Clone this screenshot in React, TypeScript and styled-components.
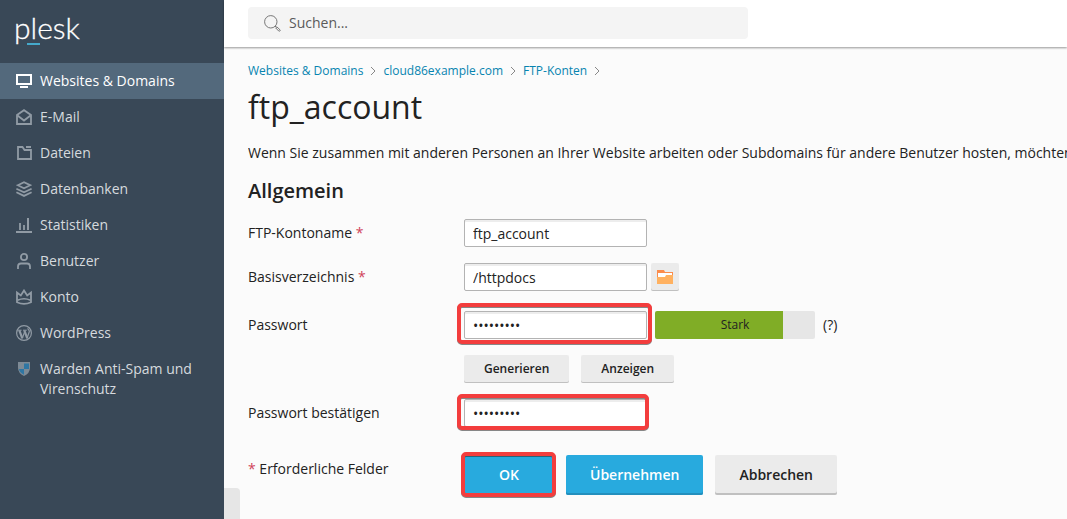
import React, { useState } from 'react';
import styled, { createGlobalStyle, css } from 'styled-components';

const GlobalStyle = createGlobalStyle`
  *, *::before, *::after { box-sizing: border-box; }
  body {
    margin: 0;
    background: #fbfbfb;
    color: #222;
    font: 14px/20px "Open Sans", "Noto Sans", sans-serif;
    overflow: hidden;
  }
  button, input { font: inherit; color: inherit; }
`;

const Page = styled.div`
  display: flex;
  min-height: 100vh;
`;

const Sidebar = styled.aside`
  flex: 0 0 224px;
  background: #394857;
`;

const Logo = styled.a`
  display: block;
  height: 63px;
  padding: 9px 14px 0;
  color: #fff;
  text-decoration: none;
  font: 300 30px/36px Lato, sans-serif;
  -webkit-text-stroke: 0.3px #fff;
`;

const LogoAccent = styled.span`
  position: relative;
  &::after {
    content: '';
    position: absolute;
    left: -4px;
    bottom: 0;
    width: 13px;
    height: 2px;
    background: #45a9cb;
  }
`;

const NavLink = styled.a<{ $active?: boolean }>`
  display: flex;
  gap: 8px;
  padding: 8px 16px;
  color: ${p => (p.$active ? '#fff' : '#d6dade')};
  background: ${p => (p.$active ? '#53697c' : 'transparent')};
  text-decoration: none;
  font-weight: 500;
  svg { color: ${p => (p.$active ? '#fff' : '#919ba5')}; }
`;

const Icon = styled.svg`
  flex: none;
  width: 16px;
  height: 16px;
  margin-top: 2px;
  fill: none;
  stroke: currentColor;
  stroke-width: 2;
`;

const Main = styled.div`
  flex: 1;
  min-width: 0;
`;

const TopBar = styled.header`
  height: 47px;
  padding: 7px 24px;
  background: #fff;
  box-shadow: 0 1px 2px rgba(0, 0, 0, 0.4);
`;

const SearchBox = styled.label`
  display: flex;
  align-items: center;
  gap: 8px;
  max-width: 500px;
  height: 32px;
  padding: 0 16px;
  border-radius: 4px;
  background: #f4f4f4;
  color: #777;
`;

const SearchInput = styled.input`
  flex: 1;
  min-width: 0;
  padding: 0;
  border: 0;
  outline: 0;
  background: transparent;
  &::placeholder { color: #5a5a5a; opacity: 1; }
`;

const Content = styled.main`
  padding: 14px 0 0 24px;
`;

const Breadcrumbs = styled.nav`
  display: flex;
  align-items: center;
  gap: 6px;
  font-size: 12px;
  a { color: #0784b0; text-decoration: none; }
`;

const Chevron = styled.svg`
  width: 8px;
  height: 10px;
  fill: none;
  stroke: #888;
`;

const Title = styled.h1`
  margin: 6px 0 16px;
  font-size: 32px;
  line-height: 40px;
  font-weight: 400;
`;

const Intro = styled.p`
  margin: 0;
  overflow: hidden;
  white-space: nowrap;
`;

const SectionTitle = styled.h2`
  margin: 14px 0;
  font-size: 20px;
  line-height: 28px;
  font-weight: 600;
`;

const Row = styled.div<{ $gap?: number; $top?: boolean }>`
  display: grid;
  grid-template-columns: 216px 1fr;
  align-items: ${p => (p.$top ? 'start' : 'center')};
  margin-bottom: ${p => p.$gap ?? 16}px;
`;

const Legend = styled.span`
  padding-top: 4px;
`;

const Required = styled.span`
  color: #d0435a;
`;

const Controls = styled.div<{ $gap?: number }>`
  display: flex;
  align-items: center;
  gap: ${p => p.$gap ?? 8}px;
`;

const frame = css`
  &::after {
    content: '';
    position: absolute;
    border: 4px solid #f33d3d;
    border-radius: 5px;
    filter: drop-shadow(0 1px 0 rgba(40, 40, 40, 0.55));
    pointer-events: none;
  }
`;

const FieldFrame = styled.div<{ $tight?: boolean }>`
  position: relative;
  display: flex;
  ${frame}
  &::after { inset: ${p => (p.$tight ? '-5px -2px -3px -7px' : '-8px -5px -5px -7px')}; }
`;

const ButtonFrame = styled.div`
  position: relative;
  display: flex;
  ${frame}
  &::after { inset: -3px -2px -2px -3px; }
`;

const TextInput = styled.input`
  width: 183px;
  height: 28px;
  padding: 0 8px;
  border: 1px solid #b3b3b3;
  border-radius: 2px;
  outline: 0;
  background: #fff;
  box-shadow: inset 0 2px 0 #ededed;
`;

const SmallButton = styled.button`
  height: 28px;
  padding: 0 20px;
  border: 0;
  border-radius: 2px;
  background: #ebebeb;
  box-shadow: inset 0 -1px 0 #c0c0c0;
  font-size: 12px;
  font-weight: 600;
`;

const FolderButton = styled(SmallButton)`
  display: grid;
  place-items: center;
  width: 28px;
  padding: 0;
`;

const LargeButton = styled.button<{ $primary?: boolean }>`
  height: 40px;
  padding: 0 24px;
  border: 0;
  border-radius: 2px;
  background: ${p => (p.$primary ? '#28aade' : '#ebebeb')};
  color: ${p => (p.$primary ? '#fff' : '#222')};
  box-shadow: inset 0 -2px 0 ${p => (p.$primary ? '#238fbd' : '#c0c0c0')};
  font-weight: 600;
`;

const OkButton = styled(LargeButton)`
  min-width: 90px;
`;

const Meter = styled.div`
  display: grid;
  width: 160px;
  height: 28px;
  border-radius: 2px;
  background: linear-gradient(to right, #80ad26 80%, #e6e6e6 80%);
  place-items: center;
  font-size: 12px;
`;

const Handle = styled.button`
  position: fixed;
  left: 224px;
  bottom: 0;
  width: 16px;
  height: 31px;
  padding: 0;
  border: 0;
  border-radius: 0 4px 0 0;
  background: #e6e6e6;
`;

const navItems = [
  {
    label: 'Websites & Domains',
    icon: <path d="M1 2h14v9H1zM4 14h8" />,
  },
  {
    label: 'E-Mail',
    icon: <><path d="M1 6 8 1.200 15 6v9H1z" strokeWidth="1.800" /><path d="m1.500 6.500 6.500 5 6.500-5" strokeWidth="1.800" /></>,
  },
  {
    label: 'Dateien',
    icon: <><path d="M2 2h4.500l2 3H15v9H2z" strokeWidth="1.800" /><path d="M10 2h5" /></>,
  },
  {
    label: 'Datenbanken',
    icon: <><path d="M1.800 4.200 8 1.200l6.200 3L8 7.200z" strokeWidth="1.800" /><path d="m.4 7.700 7.600 3.600 7.600-3.600M.4 11.300 8 14.900l7.600-3.600" strokeWidth="1.800" /></>,
  },
  {
    label: 'Statistiken',
    icon: <><path d="M0 15h16M12 13V1" /><path d="M4 13V6M8 13V8" strokeWidth="1.800" /></>,
  },
  {
    label: 'Benutzer',
    icon: <><circle cx="8" cy="4" r="3.100" strokeWidth="1.800" /><path d="M2 16v-2.500q0-3 3-3h6q3 0 3 3V16" strokeWidth="1.800" /></>,
  },
  {
    label: 'Konto',
    icon: <><path d="M1 3.500v9.700q7 3.400 14 0V3.500l-3.800 3L8 1.500l-3.200 5z" strokeWidth="1.800" /><path d="M1.500 11.200q6.500-3 13 0" strokeWidth="1.600" /></>,
  },
  {
    label: 'WordPress',
    icon: (
      <>
        <circle cx="8" cy="8" r="7.400" strokeWidth="1.200" />
        <path d="M2 5.200h3.600M7 5.200h3.800" strokeWidth="1" />
        <path d="m3.300 5.300 3 8M8.300 5.300l3 8" strokeWidth="2.200" />
        <path d="m6.300 13.300 2.200-6M11 13.300l2.300-6.500c.5-1.800-1.800-2-1.300-3.600" strokeWidth="1.200" />
      </>
    ),
  },
  {
    label: 'Warden Anti-Spam und Virenschutz',
    icon: (
      <g stroke="none">
        <path d="M2 1h12v6q0 5-6 8-6-3-6-8z" fill="#7d8a95" />
        <path d="M8 2.500h5V8H8z" fill="#2e76a3" />
        <path d="M3 8h5v5.800Q3.500 11.500 3 8z" fill="#2e76a3" />
      </g>
    ),
  },
];

const crumbs = ['Websites & Domains', 'cloud86example.com', 'FTP-Konten'];

export default function App() {
  const [name, setName] = useState('ftp_account');
  const [home, setHome] = useState('/httpdocs');
  const [password, setPassword] = useState('password1');
  const [confirm, setConfirm] = useState('password1');
  const [visible, setVisible] = useState(false);

  return (
    <>
      <GlobalStyle />
      <Page>
        <Sidebar>
          <Logo href="#">p<LogoAccent>l</LogoAccent>esk</Logo>
          <nav>
            {navItems.map((item, i) => (
              <NavLink key={item.label} href="#" $active={i === 0}>
                <Icon viewBox="0 0 16 16" aria-hidden="true">{item.icon}</Icon>
                <span>{item.label}</span>
              </NavLink>
            ))}
          </nav>
        </Sidebar>
        <Main>
          <TopBar>
            <SearchBox>
              <svg width="17" height="17" viewBox="0 0 17 17" fill="none" stroke="currentColor" aria-hidden="true">
                <circle cx="6.800" cy="6.800" r="6.200" />
                <path d="m11 11 1.500 1.500" />
                <path d="m12.800 11.800 3.200 3q.5.700-.1 1.200t-1.200 0l-3-3.100z" />
              </svg>
              <SearchInput type="search" placeholder="Suchen..." aria-label="Suchen" />
            </SearchBox>
          </TopBar>
          <Content>
            <Breadcrumbs>
              {crumbs.map(c => (
                <React.Fragment key={c}>
                  <a href="#">{c}</a>
                  <Chevron viewBox="0 0 8 10" aria-hidden="true"><path d="m2 1 4 4-4 4" /></Chevron>
                </React.Fragment>
              ))}
            </Breadcrumbs>
            <Title>ftp_account</Title>
            <Intro>
              Wenn Sie zusammen mit anderen Personen an Ihrer Website arbeiten oder Subdomains für andere Benutzer hosten, möchten
            </Intro>
            <SectionTitle>Allgemein</SectionTitle>
            <form onSubmit={e => e.preventDefault()}>
              <Row>
                <label htmlFor="name">FTP-Kontoname <Required>*</Required></label>
                <Controls>
                  <TextInput id="name" value={name} onChange={e => setName(e.target.value)} />
                </Controls>
              </Row>
              <Row $gap={20}>
                <label htmlFor="home">Basisverzeichnis <Required>*</Required></label>
                <Controls $gap={4}>
                  <TextInput id="home" value={home} onChange={e => setHome(e.target.value)} />
                  <FolderButton type="button" aria-label="Verzeichnis wählen">
                    <svg width="16" height="14" viewBox="0 0 16 14" aria-hidden="true">
                      <path d="M0 0h7l1 2h8v5H0z" fill="#fb8c4c" />
                      <path d="M1 3h14v4H1z" fill="#fff" />
                      <path d="M0 7h8l1-2h7v9H0z" fill="#ffb160" />
                    </svg>
                  </FolderButton>
                </Controls>
              </Row>
              <Row>
                <label htmlFor="password">Passwort</label>
                <Controls>
                  <FieldFrame>
                    <TextInput id="password" type={visible ? 'text' : 'password'} value={password} onChange={e => setPassword(e.target.value)} />
                  </FieldFrame>
                  <Meter>Stark</Meter>
                  <span>(?)</span>
                </Controls>
              </Row>
              <Row>
                <span />
                <Controls $gap={12}>
                  <SmallButton type="button">Generieren</SmallButton>
                  <SmallButton type="button" onClick={() => setVisible(!visible)}>Anzeigen</SmallButton>
                </Controls>
              </Row>
              <Row $gap={28}>
                <label htmlFor="confirm">Passwort bestätigen</label>
                <Controls>
                  <FieldFrame $tight>
                    <TextInput id="confirm" type="password" value={confirm} onChange={e => setConfirm(e.target.value)} />
                  </FieldFrame>
                </Controls>
              </Row>
              <Row $gap={24} $top>
                <Legend><Required>*</Required> Erforderliche Felder</Legend>
                <Controls $gap={12}>
                  <ButtonFrame><OkButton $primary type="submit">OK</OkButton></ButtonFrame>
                  <LargeButton $primary type="button">Übernehmen</LargeButton>
                  <LargeButton type="button">Abbrechen</LargeButton>
                </Controls>
              </Row>
            </form>
          </Content>
        </Main>
        <Handle type="button" aria-label="Seitenleiste umschalten" />
      </Page>
    </>
  );
}
